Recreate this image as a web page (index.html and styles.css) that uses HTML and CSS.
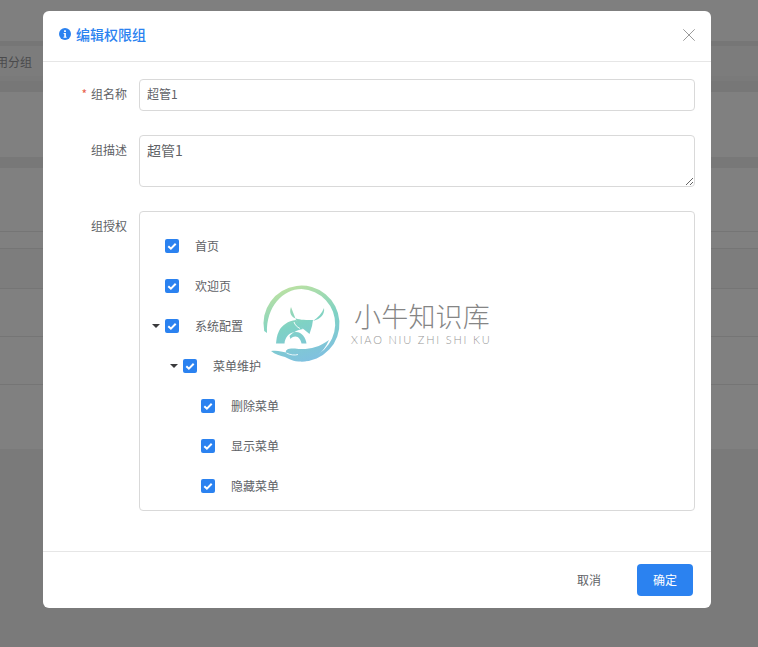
FILE: index.html
```html
<!DOCTYPE html>
<html lang="zh">
<head>
<meta charset="utf-8">
<title>编辑权限组</title>
<link rel="stylesheet" href="styles.css">
</head>
<body>
<div class="backdrop">
  <div class="bg-top"></div>
  <div class="bg-band"></div>
  <div class="bg-tabs"><div class="bg-tab-text"><span>常用分组</span></div></div>
  <div class="bg-sub"></div>
  <div class="bg-band2"></div>
  <div class="bg-plain h65"></div>
  <div class="bg-band3"></div>
  <div class="bg-row h64"></div>
  <div class="bg-row h17"></div>
  <div class="bg-row h40"></div>
  <div class="bg-row h48"></div>
  <div class="bg-row h48"></div>
  <div class="bg-plain h64"></div>
  <div class="bg-foot"></div>
</div>

<div class="modal">
  <header class="modal-head">
    <svg class="info" viewBox="0 0 12 12" width="12" height="12"><circle cx="6" cy="6" r="6" fill="#2b82f0"/><rect x="5.1" y="2.3" width="1.8" height="1.7" fill="#fff"/><path d="M4.6 5h2.3v3.8h.7V9.8H4.5V8.8h.8V6H4.6z" fill="#fff"/></svg>
    <h1 class="modal-title">编辑权限组</h1>
    <svg class="close" viewBox="0 0 12 12" width="12" height="12"><path d="M.3.3l11.4 11.4M11.7.3L.3 11.7" stroke="#9a9a9a" stroke-width="1" fill="none"/></svg>
  </header>
  <div class="modal-body">
    <div class="form-row row-name">
      <label class="form-label"><span class="req">*</span>组名称</label>
      <input class="input" type="text" value="超管1">
    </div>
    <div class="form-row row-desc">
      <label class="form-label">组描述</label>
      <textarea class="textarea">超管1</textarea>
    </div>
    <div class="form-row">
      <label class="form-label">组授权</label>
      <div class="tree">
        <div class="node"><span class="arrow-slot"></span><span class="check"><svg viewBox="0 0 14 14" width="14" height="14"><path d="M3.3 7.2l2.6 2.5 4.8-5" fill="none" stroke="#fff" stroke-width="2"/></svg></span><span class="node-text">首页</span></div>
        <div class="node"><span class="arrow-slot"></span><span class="check"><svg viewBox="0 0 14 14" width="14" height="14"><path d="M3.3 7.2l2.6 2.5 4.8-5" fill="none" stroke="#fff" stroke-width="2"/></svg></span><span class="node-text">欢迎页</span></div>
        <div class="node"><span class="arrow-slot"><i class="arrow"></i></span><span class="check"><svg viewBox="0 0 14 14" width="14" height="14"><path d="M3.3 7.2l2.6 2.5 4.8-5" fill="none" stroke="#fff" stroke-width="2"/></svg></span><span class="node-text">系统配置</span></div>
        <div class="node lv1"><span class="arrow-slot"><i class="arrow"></i></span><span class="check"><svg viewBox="0 0 14 14" width="14" height="14"><path d="M3.3 7.2l2.6 2.5 4.8-5" fill="none" stroke="#fff" stroke-width="2"/></svg></span><span class="node-text">菜单维护</span></div>
        <div class="node lv2"><span class="arrow-slot"></span><span class="check"><svg viewBox="0 0 14 14" width="14" height="14"><path d="M3.3 7.2l2.6 2.5 4.8-5" fill="none" stroke="#fff" stroke-width="2"/></svg></span><span class="node-text">删除菜单</span></div>
        <div class="node lv2"><span class="arrow-slot"></span><span class="check"><svg viewBox="0 0 14 14" width="14" height="14"><path d="M3.3 7.2l2.6 2.5 4.8-5" fill="none" stroke="#fff" stroke-width="2"/></svg></span><span class="node-text">显示菜单</span></div>
        <div class="node lv2"><span class="arrow-slot"></span><span class="check"><svg viewBox="0 0 14 14" width="14" height="14"><path d="M3.3 7.2l2.6 2.5 4.8-5" fill="none" stroke="#fff" stroke-width="2"/></svg></span><span class="node-text">隐藏菜单</span></div>
      </div>
    </div>
  </div>
  <footer class="modal-foot">
    <button class="btn btn-text" type="button">取消</button>
    <button class="btn btn-primary" type="button">确定</button>
  </footer>
</div>

<div class="watermark">
  <svg class="wm-logo" viewBox="0 0 90 90" width="90" height="90">
    <defs>
      <linearGradient id="wmg" gradientUnits="userSpaceOnUse" x1="30" y1="5" x2="55" y2="84">
        <stop offset="0" stop-color="#bfe2a0"/>
        <stop offset=".5" stop-color="#7fd2c4"/>
        <stop offset="1" stop-color="#80bfe2"/>
      </linearGradient>
    </defs>
    <path d="M9.200 51A38 38 0 1 1 46.500 81.600L44 79A34.500 34.500 0 0 0 46.500 9.100C28 9.100 11 27 12 53Z" fill="url(#wmg)"/>
    <path d="M16 71C22 70 27 71.500 31 72.500C30 69.500 34 68 40 68.500C50 70 62 69 74 60C68 74 57 81.600 46.500 81.600C38 81.600 34 79 30 77C25 75.500 20 74.500 16 71Z" fill="url(#wmg)"/>
    <path d="M31.500 73C35 75 40 75.500 43 74.500" stroke="#fff" stroke-width=".8" fill="none"/>
    <path d="M36 27C33.500 33 37 37.500 41 38.500C45 40 52 40 58 40L57 46L54.500 54L49 49.500L44 46L41 40Z" fill="url(#wmg)"/>
    <path d="M69 28C70 34 66 39 58 41C63 37.500 67 33.500 69 28Z" fill="url(#wmg)"/>
    <path d="M41 40C33 41 27 45 24 51C21.500 56 21.500 60 21 63.500H29.500C30 57.500 34 52 41 52C47 52 51 58 51.500 63.500H46.500C46 60 43.500 56.500 40.500 56.500C38 56.500 36.500 57.500 35.500 59L34.500 56C37 53 42 50 48 49Z" fill="url(#wmg)"/>
    <path d="M39 42C40 45 42 47 45 48.500" stroke="#fff" stroke-width=".9" fill="none"/>
  </svg>
  <div class="wm-text">
    <div class="wm-cn">小牛知识库</div>
    <div class="wm-en">XIAO NIU ZHI SHI KU</div>
  </div>
</div>
</body>
</html>
```
FILE: styles.css
```css
* { box-sizing: border-box; }
html, body { margin: 0; height: 100%; overflow: hidden; }
body {
  font-family: "Noto Sans CJK SC", "Liberation Sans", sans-serif;
  font-size: 12px;
  color: #606266;
  background: #808080;
  position: relative;
}
.backdrop { height: 100%; display: flex; flex-direction: column; background: #808080; }
.bg-top { height: 41px; background: #7f7f7f; }
.bg-band { height: 5px; background: #767676; }
.bg-tabs { height: 30px; background: #7c7c7c; display: flex; align-items: center; }
.bg-tab-text { width: 32px; overflow: hidden; display: flex; justify-content: flex-end; white-space: nowrap; color: #4a4a4c; flex: none; }
.bg-tab-text span { flex: none; }
.bg-sub { height: 5px; background: #7a7a7a; }
.bg-band2 { height: 11px; background: #777; }
.bg-plain { background: #808080; }
.h65 { height: 65px; }
.h64 { height: 64px; }
.bg-band3 { height: 11px; background: #787878; }
.bg-row { background: #808080; border-bottom: 1px solid #757575; }
.h17 { height: 17px; }
.h40 { height: 40px; background: #7d7d7d; }
.h48 { height: 48px; }
.bg-foot { flex: 1; background: #7a7a7a; }

.modal {
  position: absolute;
  left: 43px;
  top: 11px;
  width: 668px;
  height: 597px;
  background: #fff;
  border-radius: 6px;
  display: flex;
  flex-direction: column;
}
.modal-head {
  height: 51px;
  flex: none;
  display: flex;
  align-items: center;
  padding: 0 16px 4px;
  border-bottom: 1px solid #e6e6e6;
}
.info { flex: none; }
.modal-title { margin: 0 0 0 5px; font-size: 14px; font-weight: 500; color: #2b82f0; flex: 1; line-height: 20px; }
.close { flex: none; margin-top: 2px; }
.modal-body { flex: 1; padding: 17px 16px 0 0; }
.form-row { display: flex; align-items: flex-start; }
.row-name { margin-bottom: 24px; }
.row-desc { margin-bottom: 24px; }
.form-label { width: 96px; flex: none; padding-right: 12px; text-align: right; line-height: 30px; color: #606266; }
.req { color: #e8604c; margin-right: 4px; }
.input {
  flex: 1;
  height: 32px;
  border: 1px solid #d9d9d9;
  border-radius: 4px;
  padding: 0 7px 4px;
  font: inherit;
  color: #606266;
  background: #fff;
  outline: none;
}
.textarea {
  flex: 1;
  height: 52px;
  border: 1px solid #d9d9d9;
  border-radius: 4px;
  padding: 3px 7px;
  font-family: inherit;
  font-size: 14px;
  line-height: 22px;
  color: #606266;
  background: #fff;
  outline: none;
}
.tree {
  flex: 1;
  height: 300px;
  border: 1px solid #d9d9d9;
  border-radius: 4px;
  padding: 14px 0 0 11px;
}
.node { height: 40px; display: flex; align-items: center; }
.lv1 { padding-left: 18px; }
.lv2 { padding-left: 36px; }
.arrow-slot { width: 14px; flex: none; display: flex; align-items: center; }
.arrow {
  display: block;
  width: 0;
  height: 0;
  margin-left: 1px;
  border-left: 4px solid transparent;
  border-right: 4px solid transparent;
  border-top: 4px solid #3a3a3c;
}
.check {
  width: 14px;
  height: 14px;
  flex: none;
  background: #2b82f0;
  border-radius: 2px;
  display: block;
}
.check svg { display: block; }
.node-text { margin: 0 0 2px 16px; color: #606266; }

.modal-foot {
  height: 57px;
  flex: none;
  border-top: 1px solid #e6e6e6;
  display: flex;
  justify-content: flex-end;
  align-items: flex-start;
  padding: 12px 18px 0 0;
}
.btn { height: 32px; border: 0; border-radius: 4px; font: inherit; padding: 0 0 2px; }
.btn-text { width: 56px; background: #fff; color: #606266; }
.btn-primary { width: 56px; margin-left: 20px; background: #2b82f0; color: #fff; }

.watermark {
  position: absolute;
  left: 255px;
  top: 280px;
  display: flex;
  align-items: flex-start;
  pointer-events: none;
}
.wm-logo { flex: none; display: block; }
.wm-text { margin-left: 6px; display: flex; flex-direction: column; }
.wm-cn { font-size: 27px; line-height: 34px; font-weight: 300; margin: 19px 0 1px 3px; letter-spacing: .2px; color: #858585; white-space: nowrap; }
.wm-en { font-family: "Lato", sans-serif; font-weight: 300; font-size: 11px; line-height: 12px; letter-spacing: 1.8px; color: #969696; white-space: nowrap; }
```
